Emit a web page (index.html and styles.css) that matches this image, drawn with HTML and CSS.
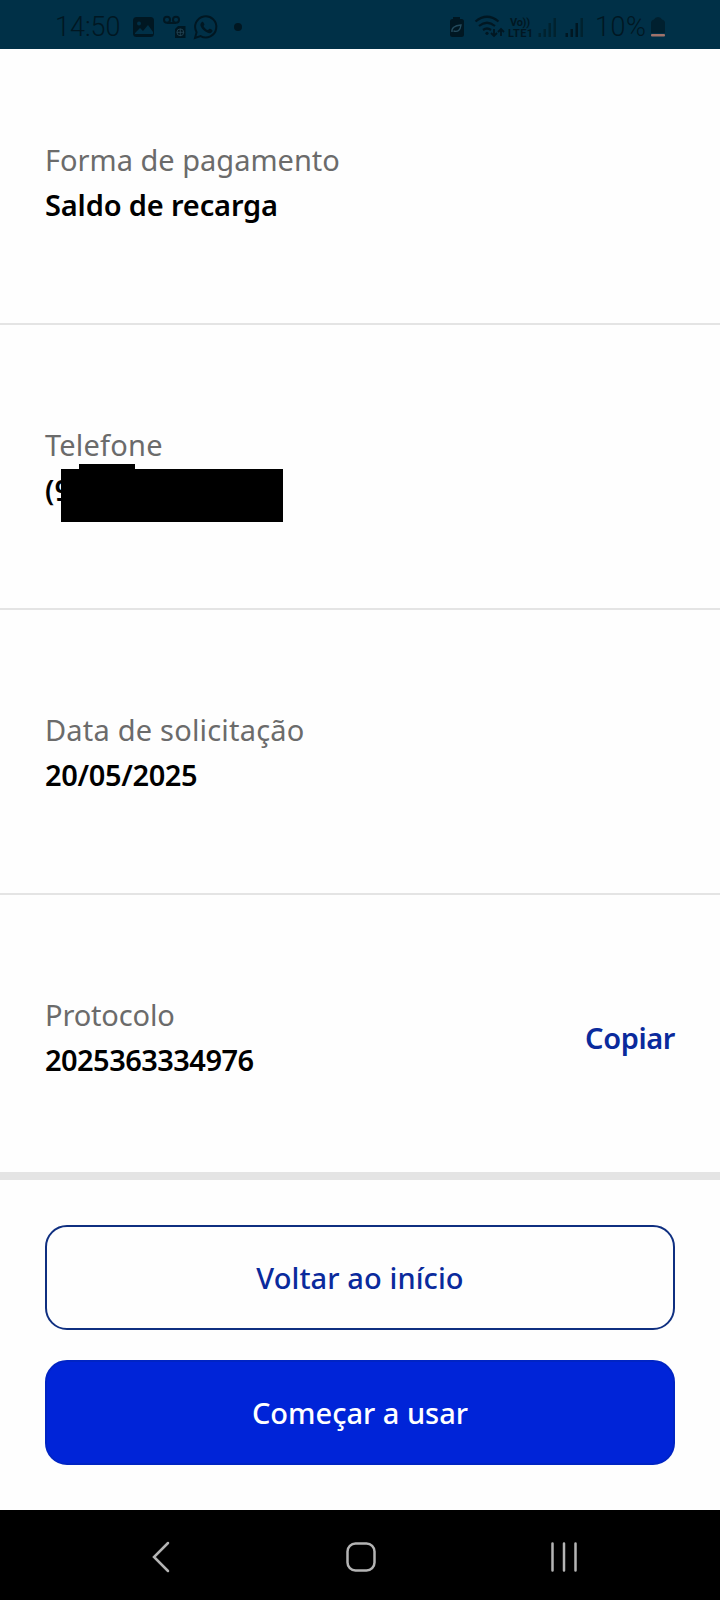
FILE: index.html
```html
<!DOCTYPE html>
<html lang="pt-BR">
<head>
  <meta charset="UTF-8">
  <title>Detalhes da solicitação</title>
  <link rel="stylesheet" href="styles.css">
</head>
<body>
  <header class="status-bar">
    <span class="hora">14:50</span>
    <svg class="icones-esquerda" width="112" height="26" viewBox="132 13 112 26">
      <rect x="133" y="16" width="21" height="20" rx="3.5" fill="#001722"/>
      <circle cx="139" cy="22.5" r="2" fill="#003047"/>
      <path d="M135 32l5-5 3 3 5-6 5 7v2h-18z" fill="#003047"/>
      <g fill="none" stroke="#001722" stroke-width="2">
        <circle cx="167" cy="18.8" r="3"/>
        <circle cx="176" cy="18.8" r="3"/>
        <path d="M167 22h9"/>
      </g>
      <path d="M178 25h7.5v12H175v-9z" fill="#001722"/>
      <g fill="none" stroke="#26495b" stroke-width="0.8">
        <circle cx="180.3" cy="31.3" r="3.4"/>
        <path d="M177 31.3h7M180.3 28v7"/>
      </g>
      <path d="M195 37l1.6-5.8a10.6 10.6 0 1 1 4 3.9z" fill="none" stroke="#001722" stroke-width="2"/>
      <path d="M201.6 21.2c1.2-1.2 2 0 2.8 2 .3.8-1 1.4-.8 2 1 2 2.3 3 4 3.8.8.2 1.4-1.5 2.2-1.2 2.2.9 3.2 1.4 2.6 2.6-1.6 3-5.4 1.8-8.4-.8-3-3-5-6-2.4-8.4z" fill="#001722"/>
      <circle cx="238" cy="26" r="4" fill="#001722"/>
    </svg>
    <svg class="icones-direita" width="138" height="26" viewBox="448 13 138 26">
      <path d="M453 16h7v2h1.5q2.5 0 2.5 2.5v13q0 2.5-2.5 2.5h-9q-2.5 0-2.5-2.5v-13q0-2.5 2.5-2.5h.5z" fill="#001722"/>
      <path d="M452 31q-1-6 9-7-1 8-7.5 6" fill="none" stroke="#234a5c" stroke-width="1.4"/>
      <g fill="none" stroke="#001722" stroke-width="2.2">
        <path d="M475.5 20.5q11.5-9.5 23 0M479 25q8-6.5 16 0M483 29q4-3 8 0"/>
        <path d="M494 28v7M491 32l3 3 3-3M501 35v-7M498 31l3-3 3 3" stroke-width="1.8"/>
      </g>
      <circle cx="487" cy="32.3" r="1.6" fill="#001722"/>
      <g class="volte">
        <text x="510" y="24.5" textLength="20">Vo))</text>
        <text x="508" y="36" textLength="25">LTE1</text>
      </g>
      <g fill="#00222f">
        <rect x="538.5" y="32" width="2.5" height="4"/>
        <rect x="543.5" y="28" width="2.5" height="8"/>
        <rect x="548.5" y="22" width="2.5" height="14"/>
        <rect x="553.5" y="17" width="2.5" height="19"/>
      </g>
      <g fill="#001722">
        <rect x="565.5" y="32" width="2.5" height="4"/>
        <rect x="570.5" y="28" width="2.5" height="8"/>
        <rect x="575.5" y="22" width="2.5" height="14"/>
        <rect x="580.5" y="17" width="2.5" height="19" fill="#00222f"/>
      </g>
    </svg>
    <span class="bateria">10%</span>
    <svg class="icone-bateria" width="16" height="22" viewBox="0 0 16 22">
      <path d="M1 17V7q0-3 3-3.5Q5 1 8 1t4 2.5q3 .5 3 3.5v10z" fill="#00202f"/>
      <rect x="1" y="18" width="14" height="2.5" rx="1" fill="#a0726a"/>
    </svg>
  </header>

  <main class="detalhes">
    <section class="item">
      <div>
        <p class="rotulo">Forma de pagamento</p>
        <p class="valor saldo">Saldo de recarga</p>
      </div>
    </section>
    <section class="item">
      <div>
        <p class="rotulo telefone">Telefone</p>
        <p class="valor numero">(9<span class="tarja"></span></p>
      </div>
    </section>
    <section class="item">
      <div>
        <p class="rotulo solicitacao">Data de solicitação</p>
        <p class="valor data">20/05/2025</p>
      </div>
    </section>
    <section class="item">
      <div>
        <p class="rotulo protocolo">Protocolo</p>
        <p class="valor codigo">2025363334976</p>
      </div>
      <a class="copiar">Copiar</a>
    </section>
  </main>

  <div class="acoes">
    <button type="button" class="botao contorno">Voltar ao início</button>
    <button type="button" class="botao cheio">Começar a usar</button>
  </div>

  <nav class="navegacao">
    <svg width="20" height="32" viewBox="0 0 20 32"><path d="M17 2L3 16l14 14"/></svg>
    <svg width="32" height="32" viewBox="0 0 32 32"><rect x="2.5" y="2.5" width="27" height="27" rx="8"/></svg>
    <svg width="28" height="32" viewBox="0 0 28 32"><path d="M2.5 2.5v27M14 2.5v27M25.5 2.5v27"/></svg>
  </nav>
</body>
</html>
```
FILE: styles.css
```css
* {
  box-sizing: border-box;
}

body {
  margin: 0;
  width: 720px;
  height: 1600px;
  background-color: #fefefe;
  color: #000;
  font-family: "Noto Sans", "Open Sans", sans-serif;
  font-size: 29px;
  display: flex;
  flex-direction: column;
}

.status-bar {
  height: 49px;
  padding: 4px 54px 0 55px;
  background-color: #003047;
  color: #001722;
  font-family: Roboto, sans-serif;
  font-size: 27px;
  font-weight: 300;
  display: flex;
  align-items: center;
}

.hora {
  width: 77px;
}

.icones-direita {
  margin-left: auto;
}

.bateria {
  margin-left: 9px;
  width: 55px;
  letter-spacing: 0.5px;
}

.volte {
  font-size: 11px;
  font-weight: 700;
  fill: #001722;
}

.item {
  height: 285px;
  padding: 0 45px;
  border-bottom: 2px solid #e4e4e4;
  display: flex;
  justify-content: space-between;
  align-items: center;
}

.item:first-child {
  height: 276px;
  padding-bottom: 8px;
}

.item:last-child {
  padding-top: 7px;
  border-bottom: 8px solid #e4e4e4;
}

p {
  margin: 0;
  line-height: 45px;
  white-space: nowrap;
}

.rotulo {
  color: #6b6b6b;
}

.telefone,
.solicitacao {
  letter-spacing: 0.2px;
}

.protocolo {
  letter-spacing: -0.15px;
}

.valor {
  font-weight: 600;
}

.saldo {
  letter-spacing: -0.15px;
}

.data {
  letter-spacing: -0.35px;
}

.codigo {
  letter-spacing: -0.55px;
}

.numero {
  position: relative;
}

/* tarja sobre o número */
.tarja {
  position: absolute;
  left: 16px;
  top: 2px;
  width: 222px;
  height: 53px;
  background-color: #000;
}

.tarja::before {
  content: "";
  position: absolute;
  left: 18px;
  top: -5px;
  width: 56px;
  height: 5px;
  background-color: #000;
}

.copiar {
  color: #0a2a9c;
  font-weight: 600;
  letter-spacing: -0.4px;
}

.acoes {
  padding: 45px;
  display: flex;
  flex-direction: column;
  gap: 30px;
}

.botao {
  height: 105px;
  border: 2px solid #0f2f80;
  border-radius: 22px;
  font: inherit;
  font-weight: 500;
}

.contorno {
  background-color: transparent;
  color: #0a2a9c;
  letter-spacing: 0.1px;
}

.cheio {
  background-color: #0024d8;
  border-color: #0024c4;
  color: #fff;
}

.navegacao {
  flex: 1;
  padding: 4px 142px 0 151px;
  background-color: #000;
  display: flex;
  justify-content: space-between;
  align-items: center;
}

.navegacao svg {
  fill: none;
  stroke: #b4b4b4;
  stroke-width: 2.5;
  stroke-linecap: round;
}
```
